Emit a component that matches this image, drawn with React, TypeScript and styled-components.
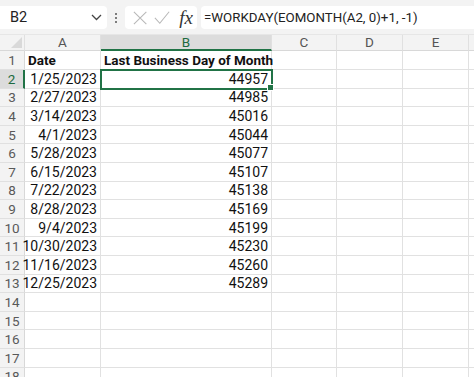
import styled, { createGlobalStyle } from 'styled-components'

const GlobalStyle = createGlobalStyle`
    html, body {
        margin: 0;
        padding: 0;
        background: #ffffff;
        overflow: hidden;
    }
    body {
        font-family: Roboto, "Noto Sans", sans-serif;
    }
`

const rows = [
    ['1/25/2023', '44957'],
    ['2/27/2023', '44985'],
    ['3/14/2023', '45016'],
    ['4/1/2023', '45044'],
    ['5/28/2023', '45077'],
    ['6/15/2023', '45107'],
    ['7/22/2023', '45138'],
    ['8/28/2023', '45169'],
    ['9/4/2023', '45199'],
    ['10/30/2023', '45230'],
    ['11/16/2023', '45260'],
    ['12/25/2023', '45289'],
]

const columns = ['A', 'B', 'C', 'D', 'E', '']
const totalRows = 18

const Page = styled.div`
    width: 474px;
    height: 377px;
    background: #f3f3f3;
    overflow: hidden;
`

const FormulaBar = styled.div`
    height: 35px;
    display: flex;
    align-items: flex-start;
    padding-top: 6px;
    box-sizing: border-box;
    background: #f3f3f3;
    border-bottom: 1px solid #e6e6e6;
`

const NameBox = styled.div`
    width: 107px;
    height: 23px;
    background: #ffffff;
    border-radius: 0 4px 4px 0;
    display: flex;
    align-items: center;
    justify-content: space-between;
    padding: 0 5px 0 10px;
    box-sizing: border-box;
    font-size: 14.5px;
    color: #222;
`

const Dots = styled.div`
    width: 18px;
    height: 23px;
    display: flex;
    flex-direction: column;
    align-items: center;
    justify-content: center;
    gap: 2px;
    span {
        width: 2px;
        height: 2px;
        border-radius: 1px;
        background: #555;
    }
`

const FnBox = styled.div`
    width: 72px;
    height: 23px;
    background: #ffffff;
    border-radius: 4px;
    display: flex;
    align-items: center;
    padding: 0 4px 0 8px;
    gap: 7px;
    box-sizing: border-box;
`

const Fx = styled.span`
    font-family: "Liberation Serif", serif;
    font-style: italic;
    font-size: 19px;
    line-height: 20px;
    color: #333;
    margin-left: 2px;
`

const FormulaInput = styled.div`
    flex: 1;
    height: 23px;
    margin-left: 4px;
    background: #ffffff;
    border-radius: 4px 0 0 4px;
    display: flex;
    align-items: center;
    padding-left: 3px;
    font-size: 13.3px;
    color: #222;
    white-space: nowrap;
`

const Sheet = styled.div`
    display: grid;
    grid-template-columns: 25px 76px 171px 65px 66px 66px 1fr;
    grid-template-rows: 16px 19px repeat(${totalRows - 1}, 18.6px);
    background: #ffffff;
`

const Corner = styled.div`
    background: #f3f3f3;
    border-right: 1px solid #e0e0e0;
    border-bottom: 1px solid #d8d8d8;
    position: relative;
    &::after {
        content: '';
        position: absolute;
        right: 2px;
        bottom: 2px;
        width: 0;
        height: 0;
        border-left: 11px solid transparent;
        border-bottom: 11px solid #d9d9d9;
    }
`

const ColHeader = styled.div<{ $active?: boolean }>`
    background: ${p => (p.$active ? '#dcdcdc' : '#f3f3f3')};
    color: ${p => (p.$active ? '#1d6b40' : '#555')};
    border-right: 1px solid #e0e0e0;
    border-bottom: ${p => (p.$active ? '2px solid #217346' : '1px solid #d8d8d8')};
    font-size: 13.5px;
    line-height: 15px;
    text-align: center;
    box-sizing: border-box;
`

const RowHeader = styled.div<{ $active?: boolean }>`
    background: ${p => (p.$active ? '#dcdcdc' : '#f3f3f3')};
    color: ${p => (p.$active ? '#1d6b40' : '#595959')};
    border-right: ${p => (p.$active ? '2px solid #217346' : '1px solid #d8d8d8')};
    border-bottom: 1px solid #e0e0e0;
    font-size: 13.5px;
    display: flex;
    align-items: center;
    justify-content: center;
    box-sizing: border-box;
`

const Cell = styled.div<{ $align?: string; $bold?: boolean; $selected?: boolean }>`
    border-right: 1px solid #e1e1e1;
    border-bottom: 1px solid #e1e1e1;
    font-size: ${p => (p.$bold ? '13.5px' : '14px')};
    font-weight: ${p => (p.$bold ? 700 : 400)};
    color: #111;
    display: flex;
    align-items: center;
    justify-content: ${p => (p.$align === 'right' ? 'flex-end' : 'flex-start')};
    padding: 0 3px;
    box-sizing: border-box;
    white-space: nowrap;
    overflow: visible;
    position: relative;
    ${p =>
        p.$selected &&
        `
        outline: 2px solid #217346;
        outline-offset: -1px;
        z-index: 1;
        &::after {
            content: '';
            position: absolute;
            right: -3px;
            bottom: -3px;
            width: 5px;
            height: 5px;
            background: #217346;
            border: 1px solid #ffffff;
        }
    `}
`

function Chevron() {
    return (
        <svg width="11" height="7" viewBox="0 0 11 7">
            <path d="M1 1 L5.5 5.5 L10 1" fill="none" stroke="#444" strokeWidth="1.3" />
        </svg>
    )
}

function Cross() {
    return (
        <svg width="16" height="16" viewBox="0 0 16 16">
            <path d="M1 1 L15 15 M15 1 L1 15" stroke="#b8b8b8" strokeWidth="1.2" />
        </svg>
    )
}

function Check() {
    return (
        <svg width="18" height="15" viewBox="0 0 18 15">
            <path d="M1 8 L6.5 14 L17 1" fill="none" stroke="#b8b8b8" strokeWidth="1.2" />
        </svg>
    )
}

export default function App() {
    const body = []
    for (let r = 1; r <= totalRows; r++) {
        const active = r === 2
        body.push(
            <RowHeader key={'h' + r} $active={active}>
                {r}
            </RowHeader>
        )
        if (r === 1) {
            body.push(<Cell key="a1" $bold>Date</Cell>)
            body.push(<Cell key="b1" $bold>Last Business Day of Month</Cell>)
        } else {
            const data = rows[r - 2]
            body.push(
                <Cell key={'a' + r} $align="right">
                    {data ? data[0] : ''}
                </Cell>
            )
            body.push(
                <Cell key={'b' + r} $align="right" $selected={active}>
                    {data ? data[1] : ''}
                </Cell>
            )
        }
        for (let c = 2; c < columns.length; c++) {
            body.push(<Cell key={'c' + r + '-' + c} />)
        }
    }

    return (
        <Page>
            <GlobalStyle />
            <FormulaBar>
                <NameBox>
                    <span>B2</span>
                    <Chevron />
                </NameBox>
                <Dots>
                    <span />
                    <span />
                    <span />
                </Dots>
                <FnBox>
                    <Cross />
                    <Check />
                    <Fx>fx</Fx>
                </FnBox>
                <FormulaInput>=WORKDAY(EOMONTH(A2, 0)+1, -1)</FormulaInput>
            </FormulaBar>
            <Sheet>
                <Corner />
                {columns.map(c => (
                    <ColHeader key={'col' + c} $active={c === 'B'}>
                        {c}
                    </ColHeader>
                ))}
                {body}
            </Sheet>
        </Page>
    )
}
